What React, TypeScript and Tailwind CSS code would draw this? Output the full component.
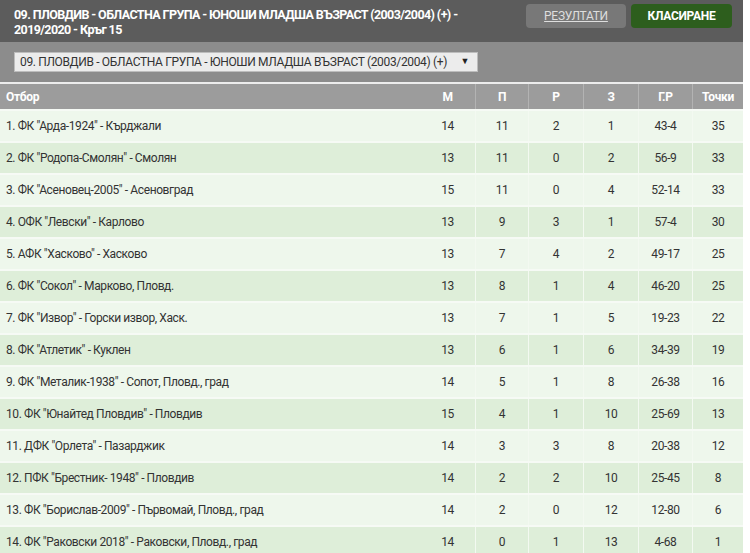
const rows: [string, number, number, number, number, string, number][] = [
  ['1. ФК "Арда-1924" - Кърджали', 14, 11, 2, 1, '43-4', 35],
  ['2. ФК "Родопа-Смолян" - Смолян', 13, 11, 0, 2, '56-9', 33],
  ['3. ФК "Асеновец-2005" - Асеновград', 15, 11, 0, 4, '52-14', 33],
  ['4. ОФК "Левски" - Карлово', 13, 9, 3, 1, '57-4', 30],
  ['5. АФК "Хасково" - Хасково', 13, 7, 4, 2, '49-17', 25],
  ['6. ФК "Сокол" - Марково, Пловд.', 13, 8, 1, 4, '46-20', 25],
  ['7. ФК "Извор" - Горски извор, Хаск.', 13, 7, 1, 5, '19-23', 22],
  ['8. ФК "Атлетик" - Куклен', 13, 6, 1, 6, '34-39', 19],
  ['9. ФК "Металик-1938" - Сопот, Пловд., град', 14, 5, 1, 8, '26-38', 16],
  ['10. ФК "Юнайтед Пловдив" - Пловдив', 15, 4, 1, 10, '25-69', 13],
  ['11. ДФК "Орлета" - Пазарджик', 14, 3, 3, 8, '20-38', 12],
  ['12. ПФК "Брестник- 1948" - Пловдив', 14, 2, 2, 10, '25-45', 8],
  ['13. ФК "Борислав-2009" - Първомай, Пловд., град', 14, 2, 0, 12, '12-80', 6],
  ['14. ФК "Раковски 2018" - Раковски, Пловд., град', 14, 0, 1, 13, '4-68', 1],
];

const cols = 'grid grid-cols-[420px_55px_53px_55px_55px_54px_51px]';

export default function App() {
  return (
    <div className="w-[750px] h-[553px] overflow-hidden bg-white font-['Roboto',sans-serif]">
      <div className="w-[743px]">
        <div className="h-[42px] bg-[#5c5c5c] flex items-center justify-between pl-[14px] pr-[11px]">
          <div className="text-white font-bold text-[12.5px] leading-[15px] tracking-[-0.6px] pt-[1px]">
            09. ПЛОВДИВ - ОБЛАСТНА ГРУПА - ЮНОШИ МЛАДША ВЪЗРАСТ (2003/2004) (+) -
            <br />
            2019/2020 - Кръг 15
          </div>
          <div className="flex gap-[5px] self-start mt-[4px]">
            <div className="w-[100px] h-[24px] rounded-[4px] bg-[#787878] flex items-center justify-center text-[12px] tracking-[-0.3px] text-[#dedede] underline">
              РЕЗУЛТАТИ
            </div>
            <div className="w-[101px] h-[24px] rounded-[4px] bg-[#2d5e1d] flex items-center justify-center text-[12px] tracking-[-0.3px] text-white font-bold">
              КЛАСИРАНЕ
            </div>
          </div>
        </div>
        <div className="h-[40px] bg-[#8c8c8c] flex items-center px-[14px]">
          <div className="w-[464px] h-[20px] bg-[#ececec] border border-[#bdbdbd] flex items-center justify-between pl-[5px] pr-[8px] text-[12px] tracking-[-0.35px] text-[#333] whitespace-nowrap">
            <span>09. ПЛОВДИВ - ОБЛАСТНА ГРУПА - ЮНОШИ МЛАДША ВЪЗРАСТ (2003/2004) (+)</span>
            <span className="text-[9px] text-[#222]">▼</span>
          </div>
        </div>
        <div className="h-[2px] bg-[#ededed]" />
        <div className={`${cols} h-[25px] bg-[#9c9c9c] text-white font-bold text-[12px] tracking-[-0.3px] items-center`}>
          <div className="pl-[6px] h-full flex items-center">Отбор</div>
          <div className="h-full flex items-center justify-center">М</div>
          <div className="h-full flex items-center justify-center border-l border-[#b3b3b3]">П</div>
          <div className="h-full flex items-center justify-center border-l border-[#b3b3b3]">Р</div>
          <div className="h-full flex items-center justify-center border-l border-[#b3b3b3]">З</div>
          <div className="h-full flex items-center justify-center border-l border-[#b3b3b3]">Г.Р</div>
          <div className="h-full flex items-center justify-center border-l border-[#b3b3b3]">Точки</div>
        </div>
        {rows.map((r, i) => (
          <div
            key={i}
            className={`${cols} h-[32px] border-t-2 border-[#f6faf5] text-[12px] tracking-[-0.4px] text-[#333] ${
              i % 2 === 0 ? 'bg-[#eef7ec]' : 'bg-[#deeed9]'
            }`}
          >
            <div className="pl-[6px] flex items-center">{r[0]}</div>
            {r.slice(1).map((v, j) => (
              <div
                key={j}
                className={`flex items-center justify-center ${j > 0 ? 'border-l border-[#f3f9f1]' : ''}`}
              >
                {v}
              </div>
            ))}
          </div>
        ))}
      </div>
    </div>
  );
}
